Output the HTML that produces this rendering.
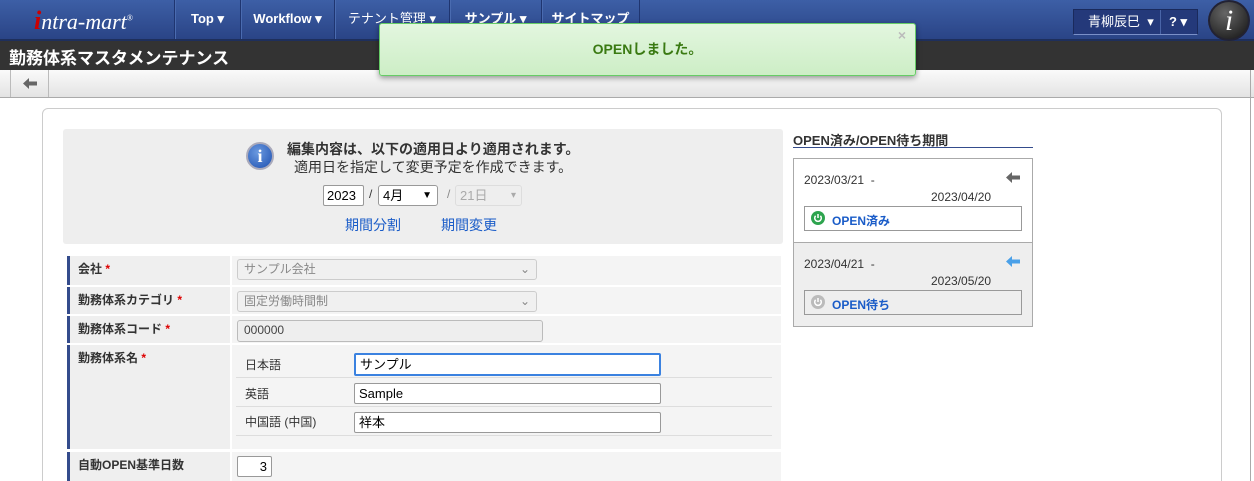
<!DOCTYPE html>
<html><head><meta charset="utf-8"><style>
*{box-sizing:border-box;margin:0;padding:0}
html,body{width:1254px;height:481px;overflow:hidden}
body{background:#fff;font-family:"Liberation Sans","Noto Sans CJK JP",sans-serif;font-size:12px;color:#333;position:relative}
.abs{position:absolute}
.nav{left:0;top:0;width:1254px;height:41px;background:linear-gradient(#3d5fa6,#2a4486);border-bottom:2px solid #1e2f5c}
.ni{top:0;height:39px;line-height:37px;color:#fff;font-weight:bold;font-size:13px;text-align:center;border-left:1px solid #1f3570;box-shadow:inset 1px 0 #4a6bb0}
.dark{left:0;top:41px;width:1254px;height:29px;background:#333;color:#fff;font-weight:bold;font-size:17px;padding:3px 0 0 9px}
.tool{left:0;top:70px;width:1254px;height:28px;background:linear-gradient(#fafafa,#e3e3e3);border-bottom:1px solid #aaa}
.lab{background:#efefef;border-left:3px solid #344c8c;font-weight:bold;padding:4px 0 0 8px;font-size:12px}
.val{background:#f4f4f4}
.sel{border:1px solid #ccc;border-radius:3px;background:#f0f0f0;color:#888;font-size:12px;padding:0 6px;line-height:19px}
.inp{border:1px solid #999;border-radius:2px;background:#fff;font-size:13px;padding:0 4px;color:#000;line-height:19px}
.red{color:#d00}
</style></head><body>
<div class="abs nav"></div>
<div class="abs" style="left:34px;top:6px;font-family:'Liberation Serif',serif;font-size:22px;color:#fff;font-style:italic">
<span style="color:#c00;font-size:26px;font-weight:bold">i</span>ntra-mart<sup style="font-size:8px">®</sup></div>
<div class="abs ni" style="left:174px;width:66px">Top ▾</div>
<div class="abs ni" style="left:240px;width:94px">Workflow ▾</div>
<div class="abs ni" style="left:334px;width:115px;font-weight:normal">テナント管理 ▾</div>
<div class="abs ni" style="left:449px;width:92px">サンプル ▾</div>
<div class="abs ni" style="left:541px;width:99px;border-right:1px solid #1f3570">サイトマップ</div>
<div class="abs" style="left:1073px;top:9px;width:125px;height:26px;background:#24397a;border:1px solid #1a2a5c;border-bottom-color:#7a90c8;color:#fff;font-size:13px;line-height:24px">
<span style="padding-left:14px">青柳辰巳 &nbsp;▾</span><span style="position:absolute;left:86px;top:0;height:24px;border-left:1px solid #4a65a8;padding-left:8px;font-weight:bold">? ▾</span></div>
<div class="abs" style="left:1208px;top:0;width:42px;height:41px;border-radius:50%;background:radial-gradient(circle at 40% 30%,#666,#111);border:2px solid #223;color:#fff;font-family:'Liberation Serif',serif;font-style:italic;font-size:30px;text-align:center;line-height:38px">i</div>
<div class="abs dark">勤務体系マスタメンテナンス</div>
<div class="abs tool"><div style="position:absolute;left:10px;top:0;width:39px;height:27px;border-left:1px solid #bbb;border-right:1px solid #bbb">
<svg style="position:absolute;left:12px;top:8px" width="14" height="11" viewBox="0 0 14 11"><path d="M0 5.5L6 0V3.5H14V7.5H6V11Z" fill="#666"/></svg></div></div>
<div class="abs" style="left:1250px;top:70px;width:1px;height:411px;background:#aaa"></div>
<div class="abs" style="left:42px;top:108px;width:1180px;height:380px;border:1px solid #ccc;border-radius:6px"></div>

<div class="abs" style="left:63px;top:129px;width:720px;height:115px;background:#eee;border-radius:3px"></div>
<div class="abs" style="left:246px;top:142px;width:28px;height:28px;border-radius:50%;background:radial-gradient(circle at 40% 35%,#6b9ae0,#1d4fb0);border:2px solid #aab;color:#fff;font-weight:bold;font-size:18px;text-align:center;line-height:24px;font-family:'Liberation Serif',serif">i</div>
<div class="abs" style="left:287px;top:139px;font-size:14px;font-weight:bold">編集内容は、以下の適用日より適用されます。</div>
<div class="abs" style="left:294px;top:157px;font-size:14px">適用日を指定して変更予定を作成できます。</div>
<div class="abs inp" style="left:323px;top:185px;width:41px;height:21px;font-size:13px;padding:0 3px">2023</div>
<div class="abs" style="left:369px;top:187px">/</div>
<div class="abs inp" style="left:378px;top:185px;width:60px;height:21px;border-radius:3px">4月<span style="position:absolute;right:5px;font-size:10px">▼</span></div>
<div class="abs" style="left:447px;top:187px;color:#888">/</div>
<div class="abs" style="left:455px;top:185px;width:67px;height:21px;border:1px solid #ddd;border-radius:3px;color:#aaa;font-size:13px;padding:0 4px;line-height:19px">21日<span style="position:absolute;right:5px;font-size:10px">▾</span></div>
<div class="abs" style="left:345px;top:215px;color:#1a5cc8;font-size:14px">期間分割</div>
<div class="abs" style="left:441px;top:215px;color:#1a5cc8;font-size:14px">期間変更</div>

<div class="abs" style="left:63px;top:254px;width:720px;height:227px;background:#fff"></div>
<div class="abs lab" style="left:67px;top:256px;width:163px;height:29px">会社 <span class="red">*</span></div>
<div class="abs val" style="left:232px;top:256px;width:549px;height:29px"></div>
<div class="abs sel" style="left:237px;top:259px;width:300px;height:21px">サンプル会社<span style="position:absolute;right:6px">⌄</span></div>
<div class="abs lab" style="left:67px;top:287px;width:163px;height:27px">勤務体系カテゴリ <span class="red">*</span></div>
<div class="abs val" style="left:232px;top:287px;width:549px;height:27px"></div>
<div class="abs sel" style="left:237px;top:291px;width:300px;height:21px">固定労働時間制<span style="position:absolute;right:6px">⌄</span></div>
<div class="abs lab" style="left:67px;top:316px;width:163px;height:27px">勤務体系コード <span class="red">*</span></div>
<div class="abs val" style="left:232px;top:316px;width:549px;height:27px"></div>
<div class="abs sel" style="left:237px;top:320px;width:306px;height:22px;color:#444;border-color:#bbb;background:#eee">000000</div>
<div class="abs lab" style="left:67px;top:345px;width:163px;height:104px">勤務体系名 <span class="red">*</span></div>
<div class="abs val" style="left:232px;top:345px;width:549px;height:104px"></div>
<div class="abs" style="left:245px;top:356px">日本語</div>
<div class="abs" style="left:245px;top:385px">英語</div>
<div class="abs" style="left:245px;top:413px">中国語 (中国)</div>
<div class="abs" style="left:236px;top:377px;width:536px;height:1px;background:#ddd"></div>
<div class="abs" style="left:236px;top:406px;width:536px;height:1px;background:#ddd"></div>
<div class="abs" style="left:236px;top:435px;width:536px;height:1px;background:#ddd"></div>
<div class="abs inp" style="left:354px;top:353px;width:307px;height:23px;border:2px solid #3b82e0;line-height:19px">サンプル</div>
<div class="abs inp" style="left:354px;top:383px;width:307px;height:21px">Sample</div>
<div class="abs inp" style="left:354px;top:412px;width:307px;height:21px">祥本</div>
<div class="abs lab" style="left:67px;top:452px;width:163px;height:29px">自動OPEN基準日数</div>
<div class="abs val" style="left:232px;top:452px;width:549px;height:29px"></div>
<div class="abs inp" style="left:237px;top:456px;width:35px;height:21px;text-align:right">3</div>

<div class="abs" style="left:793px;top:130px;font-weight:bold;font-size:13px">OPEN済み/OPEN待ち期間</div>
<div class="abs" style="left:793px;top:147px;width:240px;height:1px;background:#344c8c"></div>
<div class="abs" style="left:793px;top:158px;width:240px;height:169px;border:1px solid #aaa;background:#fff"></div>
<div class="abs" style="left:794px;top:242px;width:238px;height:84px;background:#eee;border-top:1px solid #aaa"></div>
<div class="abs" style="left:804px;top:173px">2023/03/21 &nbsp;-</div>
<div class="abs" style="left:931px;top:190px">2023/04/20</div>
<svg class="abs" style="left:1006px;top:172px" width="14" height="11" viewBox="0 0 14 11"><path d="M0 5.5L6 0V3.5H14V7.5H6V11Z" fill="#666"/></svg>
<div class="abs" style="left:804px;top:206px;width:218px;height:25px;border:1px solid #999;background:#fff;color:#1a5cc8;font-weight:bold;padding:5px 0 0 27px">OPEN済み</div>
<svg class="abs" style="left:811px;top:211px" width="14" height="14" viewBox="0 0 14 14"><circle cx="7" cy="7" r="7" fill="#2da44e"/><path d="M4.6 4.8A3.3 3.3 0 1 0 9.4 4.8M7 3V7" stroke="#fff" stroke-width="1.5" fill="none"/></svg>
<div class="abs" style="left:804px;top:257px">2023/04/21 &nbsp;-</div>
<div class="abs" style="left:931px;top:274px">2023/05/20</div>
<svg class="abs" style="left:1006px;top:256px" width="14" height="11" viewBox="0 0 14 11"><path d="M0 5.5L6 0V3.5H14V7.5H6V11Z" fill="#4aa0e8"/></svg>
<div class="abs" style="left:804px;top:290px;width:218px;height:25px;border:1px solid #999;background:#eee;color:#1a5cc8;font-weight:bold;padding:5px 0 0 27px">OPEN待ち</div>
<svg class="abs" style="left:811px;top:295px" width="14" height="14" viewBox="0 0 14 14"><circle cx="7" cy="7" r="7" fill="#bbb"/><path d="M4.6 4.8A3.3 3.3 0 1 0 9.4 4.8M7 3V7" stroke="#fff" stroke-width="1.5" fill="none"/></svg>

<div class="abs" style="left:379px;top:23px;width:537px;height:53px;background:linear-gradient(#e3f6df,#cdeec6);border:1px solid #6c6;border-radius:3px;box-shadow:0 2px 6px rgba(0,0,0,.4);color:#3a7a12;font-weight:bold;font-size:14px;text-align:center;line-height:50px">OPENしました。<span style="position:absolute;right:9px;top:-14px;color:#bbb;font-size:14px">×</span></div>
</body></html>
